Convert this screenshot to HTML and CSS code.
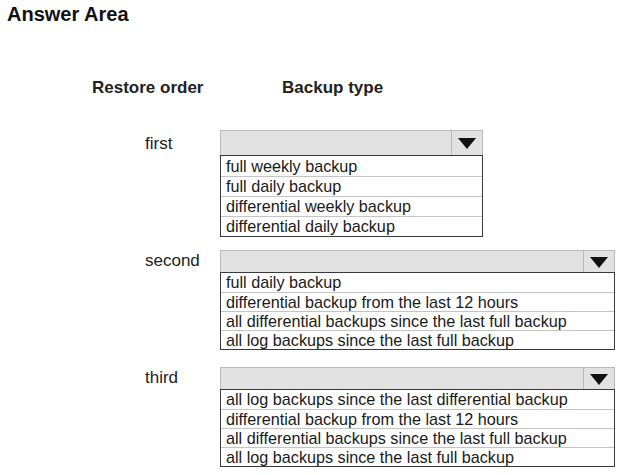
FILE: index.html
```html
<!DOCTYPE html>
<html lang="en">
<head>
    <meta charset="UTF-8">
    <title>Answer Area</title>
    <link rel="stylesheet" href="styles.css">
</head>
<body>
<h1 class="title">Answer Area</h1>
<div class="head">
    <span class="head-order">Restore order</span>
    <span class="head-type">Backup type</span>
</div>
<div class="groups">
    <div class="group narrow">
        <span class="label">first</span>
        <div class="drop">
            <div class="select"><span class="arrow"><svg width="18" height="11" viewBox="0 0 18 11"><polygon points="0,0 18,0 9,11" fill="#111"/></svg></span></div>
            <ul class="options">
                <li>full weekly backup</li>
                <li>full daily backup</li>
                <li>differential weekly backup</li>
                <li>differential daily backup</li>
            </ul>
        </div>
    </div>
    <div class="group wide">
        <span class="label">second</span>
        <div class="drop">
            <div class="select"><span class="arrow"><svg width="18" height="11" viewBox="0 0 18 11"><polygon points="0,0 18,0 9,11" fill="#111"/></svg></span></div>
            <ul class="options">
                <li>full daily backup</li>
                <li>differential backup from the last 12 hours</li>
                <li>all differential backups since the last full backup</li>
                <li>all log backups since the last full backup</li>
            </ul>
        </div>
    </div>
    <div class="group wide">
        <span class="label">third</span>
        <div class="drop">
            <div class="select"><span class="arrow"><svg width="18" height="11" viewBox="0 0 18 11"><polygon points="0,0 18,0 9,11" fill="#111"/></svg></span></div>
            <ul class="options">
                <li>all log backups since the last differential backup</li>
                <li>differential backup from the last 12 hours</li>
                <li>all differential backups since the last full backup</li>
                <li>all log backups since the last full backup</li>
            </ul>
        </div>
    </div>
</div>
</body>
</html>
```

FILE: styles.css
```css
*{margin: 0;padding: 0;list-style: none;box-sizing: border-box;}
body{background: #fff;color: #1a1a1a;font-family: "Liberation Sans", Arial, sans-serif;}
.title{font-size: 20px;line-height: 24px;font-weight: bold;margin: 2px 0 0 7px;color: #111;}
.head{display: flex;margin-top: 52px;padding-left: 92px;font-size: 17px;line-height: 20px;font-weight: bold;color: #222;}
.head-order{width: 190px;}
.groups{display: flex;flex-direction: column;gap: 13px;margin-top: 32px;padding-left: 145px;}
.group{display: flex;}
.wide+.wide{margin-top: 4px;}
.label{width: 75px;font-size: 17px;color: #222;}
.select{background: #e2e2e2;border: 1px solid #b9b9b9;border-bottom: none;display: flex;justify-content: flex-end;}
.arrow{width: 31px;border-left: 1px solid #b9b9b9;display: flex;align-items: center;justify-content: center;padding-top: 1px;}
.options{border: 1px solid #3a3a3a;background: #fff;}
.options li{font-size: 16.2px;padding-left: 5px;white-space: nowrap;}
.options li+li{border-top: 1px solid #c4c4c4;}
/* first dropdown is a little taller and narrower */
.narrow .drop{width: 263px;}
.narrow .label,.narrow .select{height: 25px;line-height: 27px;}
.narrow .options li{height: 20px;line-height: 20px;}
.narrow .options li+li{height: 20px;line-height: 19px;}
.wide .drop{width: 395px;}
.wide .label,.wide .select{height: 22px;line-height: 22px;}
.wide .options li{height: 19px;line-height: 19px;}
.wide .options li+li{height: 19px;line-height: 18px;}
```
